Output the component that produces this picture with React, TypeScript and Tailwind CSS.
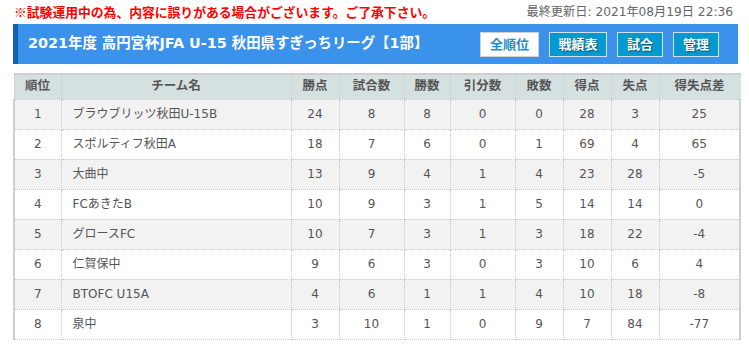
import React from "react";

type Row = {
  rank: number;
  team: string;
  pts: number;
  played: number;
  win: number;
  draw: number;
  lose: number;
  gf: number;
  ga: number;
  gd: number;
};

const rows: Row[] = [
  { rank: 1, team: "ブラウブリッツ秋田U-15B", pts: 24, played: 8, win: 8, draw: 0, lose: 0, gf: 28, ga: 3, gd: 25 },
  { rank: 2, team: "スポルティフ秋田A", pts: 18, played: 7, win: 6, draw: 0, lose: 1, gf: 69, ga: 4, gd: 65 },
  { rank: 3, team: "大曲中", pts: 13, played: 9, win: 4, draw: 1, lose: 4, gf: 23, ga: 28, gd: -5 },
  { rank: 4, team: "FCあきたB", pts: 10, played: 9, win: 3, draw: 1, lose: 5, gf: 14, ga: 14, gd: 0 },
  { rank: 5, team: "グロースFC", pts: 10, played: 7, win: 3, draw: 1, lose: 3, gf: 18, ga: 22, gd: -4 },
  { rank: 6, team: "仁賀保中", pts: 9, played: 6, win: 3, draw: 0, lose: 3, gf: 10, ga: 6, gd: 4 },
  { rank: 7, team: "BTOFC U15A", pts: 4, played: 6, win: 1, draw: 1, lose: 4, gf: 10, ga: 18, gd: -8 },
  { rank: 8, team: "泉中", pts: 3, played: 10, win: 1, draw: 0, lose: 9, gf: 7, ga: 84, gd: -77 },
];

const headers = [
  { label: "順位", w: "w-[47px]" },
  { label: "チーム名", w: "w-[230px]" },
  { label: "勝点", w: "w-[48px]" },
  { label: "試合数", w: "w-[65px]" },
  { label: "勝数", w: "w-[46px]" },
  { label: "引分数", w: "w-[65px]" },
  { label: "敗数", w: "w-[48px]" },
  { label: "得点", w: "w-[48px]" },
  { label: "失点", w: "w-[48px]" },
  { label: "得失点差", w: "w-[81px]" },
];

const cell = "border border-dotted border-[#c8c8c8] h-[30px] text-center";

export default function App() {
  return (
    <div
      className="w-[749px] h-[350px] bg-white pl-[13px] pr-[11px] text-[#555]"
      style={{ fontFamily: '"DejaVu Sans", "Noto Sans CJK JP", sans-serif' }}
    >
      <div className="flex h-[24px] items-center justify-between pl-px pr-[5px]">
        <p
          className="text-[12.8px] font-bold text-[#ff0000] leading-none"
          style={{ fontFamily: '"Noto Sans CJK JP", sans-serif' }}
        >
          ※試験運用中の為、内容に誤りがある場合がございます。ご了承下さい。
        </p>
        <p className="text-[12.2px] text-[#666] leading-none">
          最終更新日: 2021年08月19日 22:36
        </p>
      </div>

      <div className="flex h-[40px] items-center border-l-[5px] border-[#1161ad] bg-[#3a92ea] pl-[10px] pr-[19px]">
        <h1 className="flex-1 text-[14.4px] font-bold text-white">
          2021年度 高円宮杯JFA U-15 秋田県すぎっちリーグ【1部】
        </h1>
        <div className="flex gap-[10px]" style={{ fontFamily: '"Noto Sans CJK JP", sans-serif' }}>
          <button className="h-[25px] w-[59px] border border-[#d0d0d0] bg-white text-[13px] font-bold text-[#1b8ecb]">
            全順位
          </button>
          {["戦績表", "試合", "管理"].map((b) => (
            <button
              key={b}
              className={`h-[25px] ${b === "戦績表" ? "w-[58px]" : "w-[46px]"} border border-[#cfe3ee] bg-[#0499cf] text-[13px] font-bold text-white [text-shadow:1px_1px_1px_rgba(0,0,0,0.45)]`}
            >
              {b}
            </button>
          ))}
        </div>
      </div>

      <table className="mt-[9px] w-[726px] table-fixed border-collapse text-[12px]">
        <thead>
          <tr className="bg-[#d5e1e1]">
            {headers.map((h) => (
              <th
                key={h.label}
                className={`${h.w} h-[25px] border border-dotted border-[#c8c8c8] border-t-2 border-t-[#cfcfcf] text-center text-[12.5px] font-bold text-[#555] [border-top-style:solid]`}
              >
                {h.label}
              </th>
            ))}
          </tr>
        </thead>
        <tbody>
          {rows.map((r, i) => (
            <tr key={r.rank} className={i % 2 === 0 ? "bg-[#f2f2f2]" : "bg-white"}>
              <td className={`${cell} [border-left:2px_solid_#cfcfcf]`}>{r.rank}</td>
              <td className={`${cell} !text-left pl-[11px]`}>{r.team}</td>
              <td className={cell}>{r.pts}</td>
              <td className={cell}>{r.played}</td>
              <td className={cell}>{r.win}</td>
              <td className={cell}>{r.draw}</td>
              <td className={cell}>{r.lose}</td>
              <td className={cell}>{r.gf}</td>
              <td className={cell}>{r.ga}</td>
              <td className={`${cell} [border-right:2px_solid_#cfcfcf]`}>{r.gd}</td>
            </tr>
          ))}
        </tbody>
      </table>
    </div>
  );
}
